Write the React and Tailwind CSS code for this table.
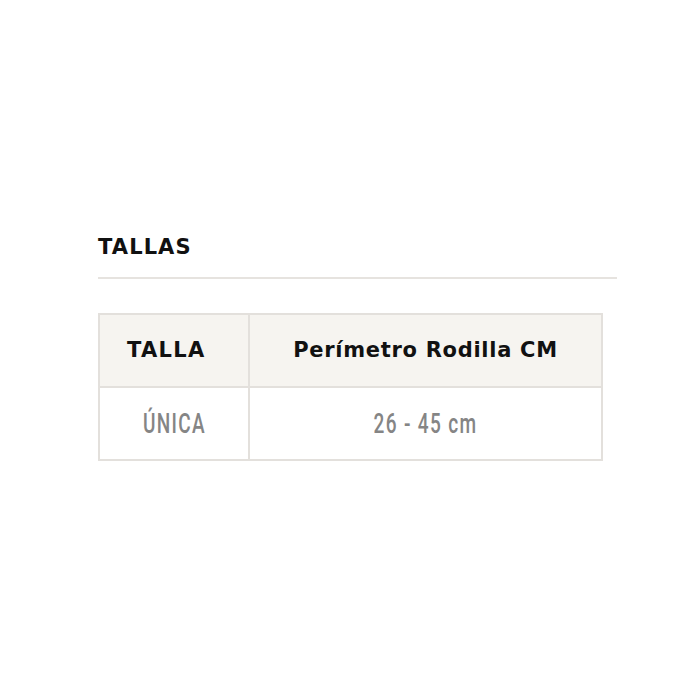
import React from "react";

function App() {
  return (
    <div className="w-[700px] h-[700px] bg-white pt-[233px] pl-[98px]">
      <h2 className="font-['DejaVu_Sans',sans-serif] font-bold text-[21px] leading-[28px] tracking-[1.1px] text-[#111]">
        TALLAS
      </h2>
      <div className="w-[519px] h-[2px] bg-[#e6e3df] mt-[16px]" />
      <table className="mt-[34px] w-[505px] border-collapse border-2 border-[#e3e0dc]">
        <thead>
          <tr className="bg-[#f6f4f0] h-[73px]">
            <th className="w-[150px] pl-[27px] text-left border-2 border-[#e3e0dc] font-['DejaVu_Sans',sans-serif] font-bold text-[21px] tracking-[1.3px] text-[#111]">
              TALLA
            </th>
            <th className="border-2 border-[#e3e0dc] font-['DejaVu_Sans',sans-serif] font-bold text-[21px] tracking-[0.7px] text-[#111]">
              Perímetro Rodilla CM
            </th>
          </tr>
        </thead>
        <tbody>
          <tr className="h-[73px]">
            <td className="border-2 border-[#e3e0dc] text-center">
              <span className="inline-block scale-x-[0.68] font-['Roboto',sans-serif] font-medium text-[28px] leading-[32px] tracking-[2px] text-[#858585]">
                ÚNICA
              </span>
            </td>
            <td className="border-2 border-[#e3e0dc] text-center">
              <span className="inline-block scale-x-[0.68] font-['Roboto',sans-serif] font-medium text-[28px] leading-[32px] tracking-[2px] text-[#858585]">
                26 - 45 cm
              </span>
            </td>
          </tr>
        </tbody>
      </table>
    </div>
  );
}

export default App;
